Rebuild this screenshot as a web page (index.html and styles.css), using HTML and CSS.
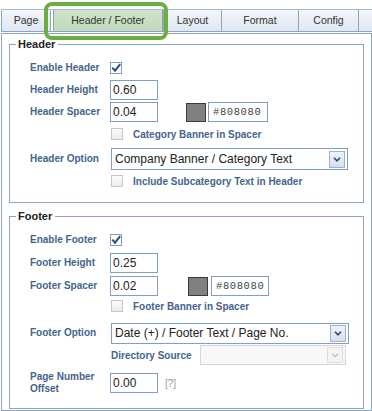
FILE: index.html
```html
<!DOCTYPE html>
<html>
<head>
<meta charset="utf-8">
<link rel="stylesheet" href="styles.css">
</head>
<body>
<div class="app">
  <div class="tabs">
    <div class="tab t-page">Page</div>
    <div class="tab t-hf active">Header / Footer</div>
    <div class="tab t-layout">Layout</div>
    <div class="tab t-format">Format</div>
    <div class="tab t-config">Config</div>
    <div class="tab t-more"></div>
    <div class="highlight"></div>
  </div>
  <div class="panel">
    <fieldset class="group g-header">
      <legend>Header</legend>
      <div class="row mt8"><span class="label">Enable Header</span>
        <span class="cb checked"><svg width="12" height="12" viewBox="0 0 12 12"><rect x="0.5" y="0.5" width="11" height="11" fill="#fff" stroke="#7f9fc6"/><path d="M2.3 5.6 L5 8.6 L10.2 2.2" fill="none" stroke="#2b4b78" stroke-width="2"/></svg></span>
      </div>
      <div class="row mt2"><span class="label">Header Height</span><span class="input num">0.60</span></div>
      <div class="row mt2"><span class="label">Header Spacer</span><span class="input num">0.04</span><span class="swatch"></span><span class="input hex">#808080</span></div>
      <div class="row mt2"><span class="label"></span><span class="cb"></span><span class="cblabel">Category Banner in Spacer</span></div>
      <div class="row tall mt4"><span class="label">Header Option</span>
        <div class="select wide"><span class="val">Company Banner / Category Text</span><span class="btn"><svg width="8" height="5" viewBox="0 0 8 5"><path d="M1 0.8 L4 3.8 L7 0.8" fill="none" stroke="#2b4b70" stroke-width="1.6"/></svg></span></div>
      </div>
      <div class="row mt1"><span class="label"></span><span class="cb"></span><span class="cblabel">Include Subcategory Text in Header</span></div>
    </fieldset>

    <fieldset class="group g-footer">
      <legend>Footer</legend>
      <div class="row mt8"><span class="label">Enable Footer</span>
        <span class="cb checked"><svg width="12" height="12" viewBox="0 0 12 12"><rect x="0.5" y="0.5" width="11" height="11" fill="#fff" stroke="#7f9fc6"/><path d="M2.3 5.6 L5 8.6 L10.2 2.2" fill="none" stroke="#2b4b78" stroke-width="2"/></svg></span>
      </div>
      <div class="row mt3"><span class="label">Footer Height</span><span class="input num">0.25</span></div>
      <div class="row mt3"><span class="label">Footer Spacer</span><span class="input num">0.02</span><span class="swatch sw2"></span><span class="input hex hex2">#808080</span></div>
      <div class="row"><span class="label"></span><span class="cb"></span><span class="cblabel">Footer Banner in Spacer</span></div>
      <div class="row tall mt6"><span class="label">Footer Option</span>
        <div class="select wide2"><span class="val">Date (+) / Footer Text / Page No.</span><span class="btn"><svg width="8" height="5" viewBox="0 0 8 5"><path d="M1 0.8 L4 3.8 L7 0.8" fill="none" stroke="#2b4b70" stroke-width="1.6"/></svg></span></div>
      </div>
      <div class="row mt1"><span class="label"></span><span class="sublabel">Directory Source</span>
        <div class="select disabled"><span class="val"></span><span class="btn"><svg width="8" height="5" viewBox="0 0 8 5"><path d="M1 0.8 L4 3.8 L7 0.8" fill="none" stroke="#c4c4c4" stroke-width="1.4"/></svg></span></div>
      </div>
      <div class="row big mt6"><span class="label two">Page Number<br>Offset</span><span class="input num">0.00</span><span class="help">[?]</span></div>
    </fieldset>
  </div>
</div>
</body>
</html>
```

FILE: styles.css
```css
* { box-sizing: border-box; }
html, body { margin: 0; padding: 0; background: #fff; }
body { font-family: "Liberation Sans", Arial, sans-serif; color: #222; }

.app { margin-left: 1px; width: 371px; }

.tabs {
  position: relative;
  display: flex;
  margin-top: 9px;
  height: 23px;
  border-top: 1px solid #a9bcd6;
  border-bottom: 1px solid #8ca5c5;
}
.tab {
  height: 21px;
  line-height: 21px;
  text-align: center;
  font-size: 10.5px;
  color: #333;
  background: linear-gradient(#f4f7fb, #dfe7f1);
  border-right: 1px solid #8ca5c5;
  flex: none;
}
.t-page { width: 50px; border-left: 1px solid #8ca5c5; }
.t-hf { width: 110px; margin-left: 2px; border-left: 1px solid #8fab8a; border-right: 1px solid #8fab8a; }
.tab.active { background: linear-gradient(#cfe3cb, #c2d9bd); color: #2f3a2d; }
.t-layout { width: 59px; border-left: 1px solid #8ca5c5; }
.t-format { width: 77px; }
.t-config { width: 60px; }
.t-more { flex: 1; border-right: none; }

.highlight {
  position: absolute;
  left: 43px;
  top: -8px;
  width: 124px;
  height: 38px;
  border: 4px solid #6cae44;
  border-radius: 8px;
}

.panel {
  margin-top: 1px;
  border: 1px solid #8ca5c5;
  height: 378px;
  padding: 4px 7px 0;
}

.group {
  margin: 0;
  border: 1px solid #8ca6c6;
  padding: 0 0 11px 6px;
  min-width: 0;
}
.g-footer { margin-top: 7px; padding-bottom: 13px; }
.group legend {
  padding: 0 3px 0 2px;
  font-size: 11px;
  line-height: 12px;
  font-weight: bold;
  color: #222;
}

.row {
  display: flex;
  align-items: center;
  height: 20px;
  padding-left: 14px;
}
.row.tall { height: 22px; }
.row.big { height: 24px; }
.mt1 { margin-top: 1px; }
.mt2 { margin-top: 2px; }
.mt3 { margin-top: 3px; }
.mt4 { margin-top: 4px; }
.mt6 { margin-top: 6px; }
.mt8 { margin-top: 8px; }

.label {
  width: 80px;
  flex: none;
  font-size: 10px;
  font-weight: bold;
  color: #44648d;
  line-height: 12px;
}
.cblabel, .sublabel {
  font-size: 10px;
  font-weight: bold;
  color: #44648d;
}
.cblabel { margin-left: 10px; }
.sublabel { width: 89px; flex: none; margin-left: 1px; }

.cb {
  width: 12px;
  height: 12px;
  flex: none;
  margin-left: 1px;
  border: 1px solid #c6c6c6;
  background: linear-gradient(#fbfbfb, #ececec);
}
.cb.checked { border: none; background: none; margin-left: 0; margin-top: -1px; }
.cb svg { display: block; }

.input {
  display: block;
  height: 20px;
  line-height: 18px;
  border: 1px solid #7f9fc6;
  background: #fff;
  font-size: 12px;
  color: #222;
  padding: 0 2px;
  flex: none;
}
.num { width: 48px; }
.swatch {
  width: 20px;
  height: 19px;
  flex: none;
  margin-left: 28px;
  background: #808080;
  border: 1px solid #3a3a3a;
}
.sw2 { margin-left: 30px; }
.hex {
  width: 60px;
  margin-left: 2px;
  font-family: "Liberation Mono", "DejaVu Sans Mono", monospace;
  font-size: 10.5px;
  letter-spacing: 0.6px;
  color: #444;
  padding-left: 4px;
}
.hex2 { width: 58px; margin-left: 3px; }

.select {
  display: flex;
  align-items: center;
  justify-content: space-between;
  height: 22px;
  border: 1px solid #7f9fc6;
  background: #fff;
  margin-left: 1px;
  padding-right: 2px;
}
.select .val { font-size: 12px; color: #222; padding-left: 3px; white-space: nowrap; }
.select .btn {
  display: flex;
  align-items: center;
  justify-content: center;
  width: 16px;
  height: 17px;
  border: 1px solid #9fb3cc;
  background: linear-gradient(#eff3f8, #d7e0eb);
}
.wide { width: 237px; }
.wide2 { width: 238px; height: 21px; }
.select.disabled {
  width: 146px;
  height: 20px;
  border-color: #d6d6d6;
  background: #f8f8f8;
  margin-left: 0;
}
.select.disabled .btn {
  border-color: #dcdcdc;
  background: #f4f4f4;
  height: 16px;
}

.help { margin-left: 7px; font-size: 10px; color: #999; margin-top: 1px; }
```
